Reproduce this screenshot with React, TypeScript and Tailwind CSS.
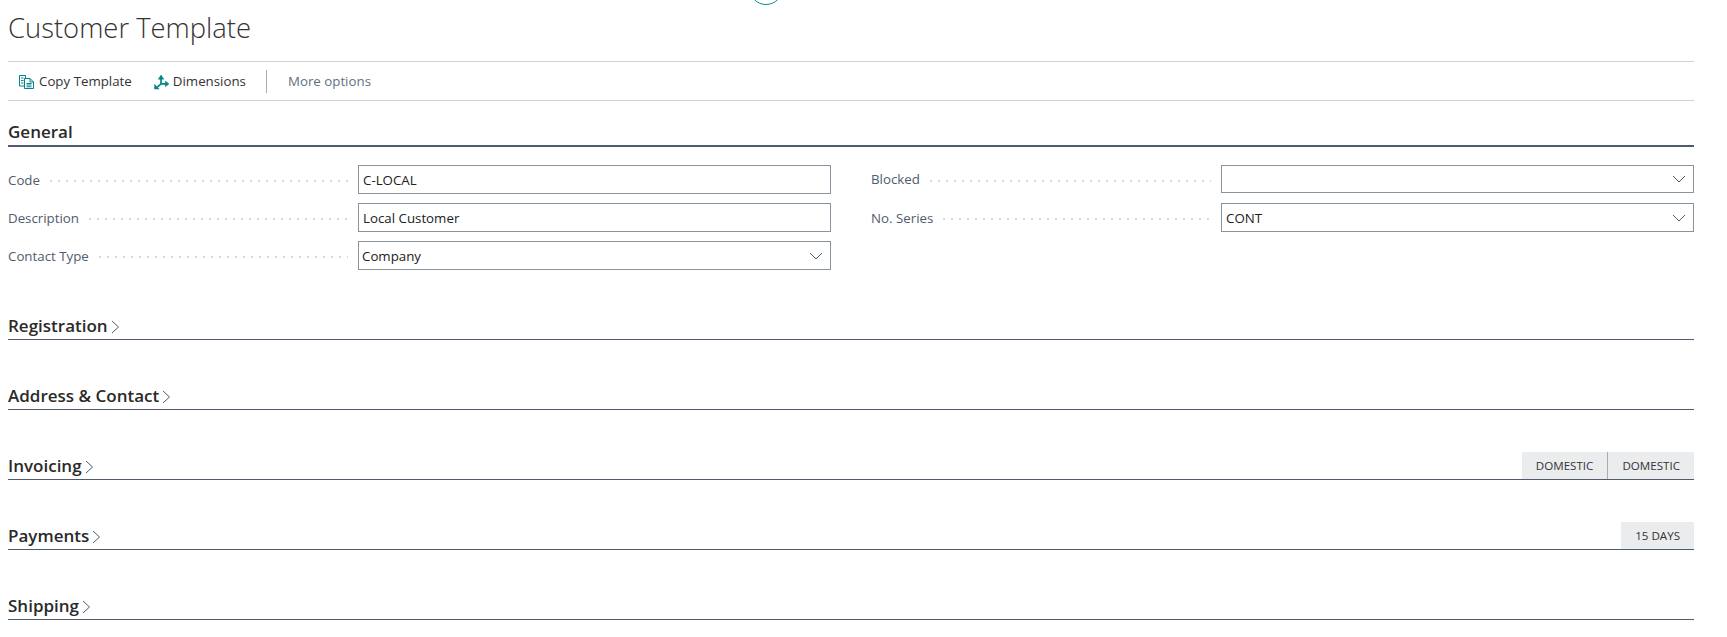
const font = "font-['Open_Sans','Noto_Sans',sans-serif]"

function CopyIcon() {
    return (
        <svg width="16" height="16" viewBox="0 0 16 16" fill="none" stroke="#008489" strokeWidth="1">
            <path d="M0.5 1.5h6v2.5M0.5 1.5v10.5h4.5M2 4h2.5M2 6.5h2.5M2 9h2.5" />
            <path d="M5.5 4.5h5.5l3.5 3.5v6.5h-9zM11 4.5v3.5h3.5M7.5 9.5h5M7.5 11h5M7.5 12.8h5" />
        </svg>
    )
}

function DimensionsIcon() {
    return (
        <svg width="15" height="16" viewBox="0 0 16 16" fill="none" stroke="#008489" strokeWidth="1.8">
            <path d="M7.5 3v7l-4 3.5M7.5 10h5" />
            <path d="M4.5 5l3-4.5 3 4.5z" fill="#008489" strokeWidth="0.5" />
            <path d="M12 7l4 3-4 3z" fill="#008489" strokeWidth="0.5" />
            <path d="M0.5 10.5v5h5z" fill="#008489" strokeWidth="0.5" />
        </svg>
    )
}

function Chevron() {
    return (
        <svg width="14" height="8" viewBox="0 0 14 8" fill="none" stroke="#505c6d" strokeWidth="1">
            <path d="M1 1l6 6 6-6" />
        </svg>
    )
}

function SectionChevron() {
    return (
        <svg width="9" height="14" viewBox="0 0 9 14" fill="none" stroke="#505c6d" strokeWidth="1" className="ml-[3px] mt-[2px]">
            <path d="M1 1l6.5 6L1 13" />
        </svg>
    )
}

function Field({ label, value, select, h = "h-[29px]", pl = "pl-[4px]" }: { label: string; value: string; select?: boolean; h?: string; pl?: string }) {
    return (
        <div className="flex items-center">
            <div className="flex w-[350px] shrink-0 items-center pr-[10px] pt-[2px]">
                <span className="text-[13.3px] text-[#505c6d]">{label}</span>
                <span className="ml-[7px] mt-[1px] h-[4px] flex-1 bg-[radial-gradient(circle,#d8d8d8_1.1px,transparent_1.5px)] bg-[length:8px_4px]" />
            </div>
            <div className={`flex ${h} flex-1 items-center justify-between border border-[#8a949e] ${pl} pr-[7px] text-[13.3px] text-[#212121]`}>
                <span className="pt-[2px]">{value}</span>
                {select && <Chevron />}
            </div>
        </div>
    )
}

function Section({ title, tags }: { title: string; tags?: string[] }) {
    return (
        <div className="flex h-[70px] items-end border-b border-[#505c6d]">
            <div className="flex items-center pb-[1px] text-[17px] leading-[24px] font-semibold text-[#2a2a2a]">
                {title}
                <SectionChevron />
            </div>
            {tags && (
                <div className="ml-auto flex">
                    {tags.map((t, i) => (
                        <div key={i} className={`flex h-[27px] items-center bg-[#eaecee] px-[14px] text-[11.6px] text-[#333] ${i > 0 ? "border-l border-[#a5acb3]" : ""}`}>
                            {t}
                        </div>
                    ))}
                </div>
            )}
        </div>
    )
}

export default function App() {
    return (
        <div className={`relative h-[637px] overflow-hidden bg-white pl-[8px] pr-[33px] ${font}`}>
            <div className="absolute left-[749px] top-[-29px] h-[34px] w-[34px] rounded-full border border-[#0f8a8f]" />

            <h1 className="h-[61px] pt-[8px] text-[27.4px] leading-[40px] font-light text-[#333]">Customer Template</h1>

            <div className="flex h-[40px] items-center border-y border-[#cfd3d8] pl-[11px] pt-[1px] text-[13.3px] text-[#333]">
                <span className="flex items-center gap-[4px]"><CopyIcon />Copy Template</span>
                <span className="ml-[22px] flex items-center gap-[4px]"><DimensionsIcon />Dimensions</span>
                <span className="ml-[20px] h-[23px] w-px bg-[#a5acb3]" />
                <span className="ml-[21px] text-[#64707f]">More options</span>
            </div>

            <div className="flex h-[46px] items-end border-b-2 border-[#505c6d] pb-[1px] text-[17px] leading-[24px] font-semibold text-[#2a2a2a]">General</div>

            <div className="mt-[18px] grid h-[124px] grid-cols-2 content-start gap-x-[40px]">
                <div className="flex flex-col gap-[9px]">
                    <Field label="Code" value="C-LOCAL" />
                    <Field label="Description" value="Local Customer" />
                    <Field label="Contact Type" value="Company" select pl="pl-[3px]" />
                </div>
                <div className="flex flex-col gap-[10px]">
                    <Field label="Blocked" value="" select h="h-[28px]" />
                    <Field label="No. Series" value="CONT" select />
                </div>
            </div>

            <div className="mt-[-19px]">
                <Section title="Registration" />
                <Section title="Address & Contact" />
                <Section title="Invoicing" tags={["DOMESTIC", "DOMESTIC"]} />
                <Section title="Payments" tags={["15 DAYS"]} />
                <Section title="Shipping" />
            </div>
        </div>
    )
}
